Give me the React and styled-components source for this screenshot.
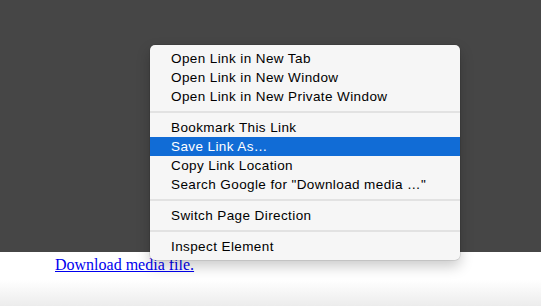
import React from "react";
import styled, { createGlobalStyle } from "styled-components";

const Global = createGlobalStyle`
  html, body { margin: 0; padding: 0; }
  body { width: 541px; height: 306px; overflow: hidden; background: #fff; }
`;

const Page = styled.div`
  position: relative;
  width: 541px;
  height: 306px;
  display: flex;
  flex-direction: column;
  overflow: hidden;
`;

const Dark = styled.div`
  height: 252px;
  background: #464646;
  flex: none;
`;

const Content = styled.div`
  flex: 1;
  padding: 4px 0 0 55px;
  background: linear-gradient(to bottom, #ffffff 0px, #ffffff 28px, #ececec 54px);
`;

const Link = styled.a`
  font-family: "Liberation Serif", "Times New Roman", serif;
  font-size: 16px;
  color: #0000ee;
  text-decoration: underline;
`;

const Menu = styled.div`
  position: absolute;
  left: 150px;
  top: 45px;
  width: 310px;
  padding: 4px 0;
  background: #f6f6f6;
  border-radius: 5px;
  box-shadow: 0 0 0 0.5px rgba(0, 0, 0, 0.15), 0 6px 14px rgba(0, 0, 0, 0.22);
  font-family: "Liberation Sans", Helvetica, Arial, sans-serif;
  font-size: 13.5px;
  letter-spacing: 0.4px;
  color: #000;
`;

const Item = styled.div`
  height: 19px;
  line-height: 19px;
  padding-left: 21px;
  white-space: nowrap;
  background: ${(p) => (p.$active ? "#116cd6" : "transparent")};
  color: ${(p) => (p.$active ? "#fff" : "#000")};
`;

const Sep = styled.div`
  height: 2px;
  margin: 5px 0;
  background: #e2e2e2;
`;

const groups = [
  ["Open Link in New Tab", "Open Link in New Window", "Open Link in New Private Window"],
  ["Bookmark This Link", "Save Link As…", "Copy Link Location", "Search Google for \"Download media …\""],
  ["Switch Page Direction"],
  ["Inspect Element"],
];

export default function App() {
  return (
    <>
      <Global />
      <Page>
        <Dark />
        <Content>
          <Link href="#">Download media file.</Link>
        </Content>
        <Menu>
          {groups.map((g, gi) => (
            <React.Fragment key={gi}>
              {gi > 0 && <Sep />}
              {g.map((t) => (
                <Item key={t} $active={t === "Save Link As…"}>{t}</Item>
              ))}
            </React.Fragment>
          ))}
        </Menu>
      </Page>
    </>
  );
}
